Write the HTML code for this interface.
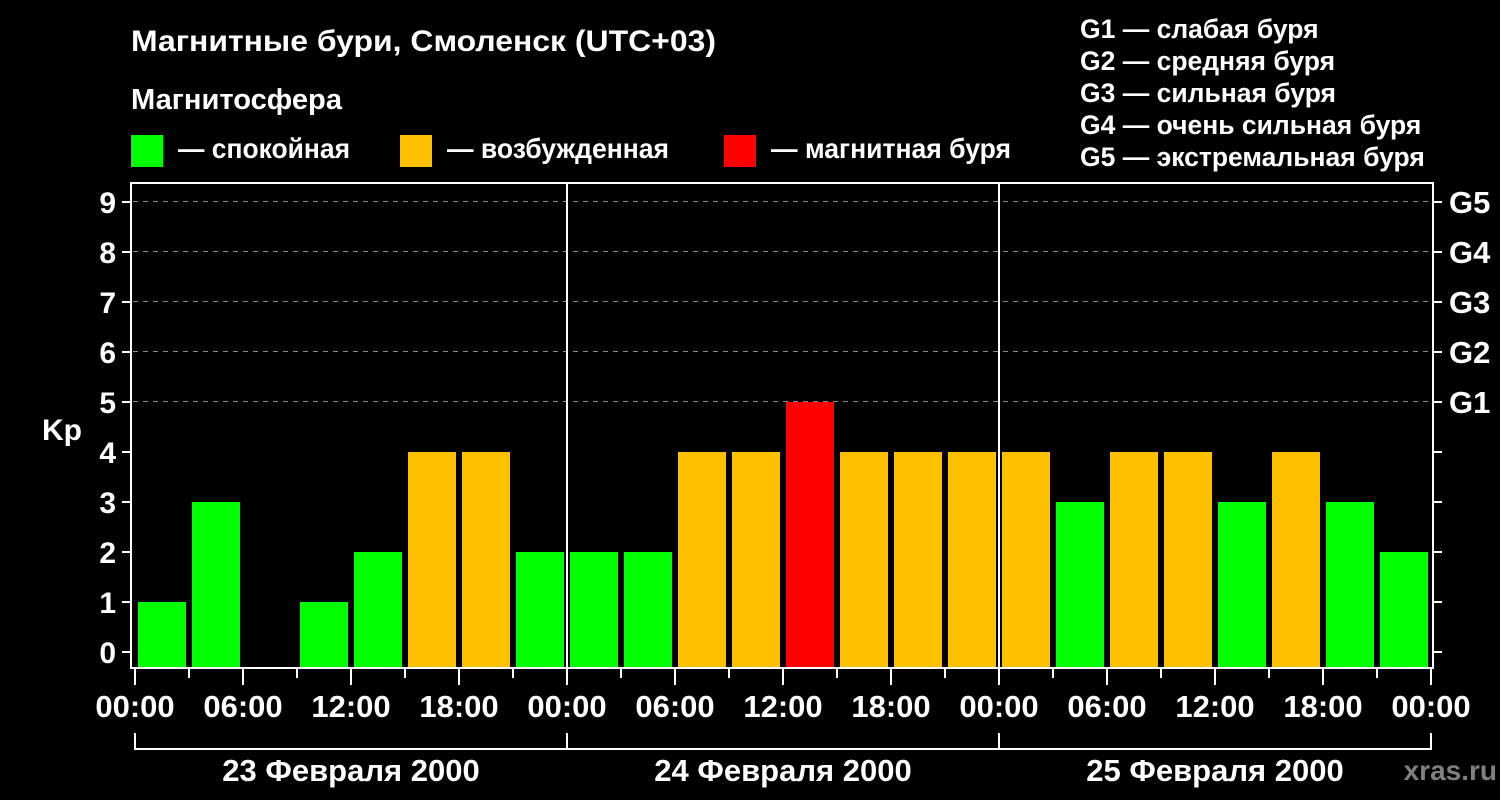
<!DOCTYPE html>
<html><head><meta charset="utf-8"><style>
html,body{margin:0;padding:0;background:#000;}
svg{display:block;}
text{font-family:"Liberation Sans",sans-serif;font-weight:bold;fill:#fff;}
</style></head><body>
<svg width="1500" height="800" viewBox="0 0 1500 800" xmlns="http://www.w3.org/2000/svg">
<rect width="1500" height="800" fill="#000"/>
<text x="131" y="51" font-size="30" textLength="585" lengthAdjust="spacingAndGlyphs">Магнитные бури, Смоленск (UTC+03)</text>
<text x="131" y="109" font-size="29" textLength="211" lengthAdjust="spacingAndGlyphs">Магнитосфера</text>
<rect x="131" y="135" width="32" height="32" fill="#00ff00"/>
<text x="178" y="158" font-size="28" textLength="172" lengthAdjust="spacingAndGlyphs">— спокойная</text>
<rect x="400" y="135" width="32" height="32" fill="#ffc000"/>
<text x="447" y="158" font-size="28" textLength="222" lengthAdjust="spacingAndGlyphs">— возбужденная</text>
<rect x="724" y="135" width="32" height="32" fill="#ff0000"/>
<text x="771" y="158" font-size="28" textLength="240" lengthAdjust="spacingAndGlyphs">— магнитная буря</text>
<g font-size="26.5">
<text x="1080" y="38">G1 — слабая буря</text>
<text x="1080" y="70">G2 — средняя буря</text>
<text x="1080" y="102">G3 — сильная буря</text>
<text x="1080" y="134">G4 — очень сильная буря</text>
<text x="1080" y="166">G5 — экстремальная буря</text>
</g>
<g stroke="#888" stroke-width="1" stroke-dasharray="5,5">
<line x1="133" x2="1432" y1="201.5" y2="201.5"/>
<line x1="133" x2="1432" y1="251.5" y2="251.5"/>
<line x1="133" x2="1432" y1="301.5" y2="301.5"/>
<line x1="133" x2="1432" y1="351.5" y2="351.5"/>
<line x1="133" x2="1432" y1="401.5" y2="401.5"/>
</g>
<g id="bars"></g>
<rect x="131" y="183" width="1302" height="485" fill="none" stroke="#fff" stroke-width="2"/>
<line x1="567" x2="567" y1="183" y2="668" stroke="#fff" stroke-width="2"/>
<line x1="999" x2="999" y1="183" y2="668" stroke="#fff" stroke-width="2"/>
<g id="ticks" stroke="#fff" stroke-width="2"></g>
<g font-size="30" text-anchor="end">
<text x="116" y="663">0</text><text x="116" y="613">1</text><text x="116" y="563">2</text>
<text x="116" y="513">3</text><text x="116" y="463">4</text><text x="116" y="413">5</text>
<text x="116" y="363">6</text><text x="116" y="313">7</text><text x="116" y="263">8</text>
<text x="116" y="213">9</text>
</g>
<text x="42" y="440" font-size="30">Kp</text>
<g font-size="31">
<text x="1449" y="413">G1</text><text x="1449" y="363">G2</text><text x="1449" y="313">G3</text>
<text x="1449" y="263">G4</text><text x="1449" y="213">G5</text>
</g>
<g font-size="31" text-anchor="middle">
<text x="135" y="717">00:00</text><text x="243" y="717">06:00</text><text x="351" y="717">12:00</text><text x="459" y="717">18:00</text>
<text x="567" y="717">00:00</text><text x="675" y="717">06:00</text><text x="783" y="717">12:00</text><text x="891" y="717">18:00</text>
<text x="999" y="717">00:00</text><text x="1107" y="717">06:00</text><text x="1215" y="717">12:00</text><text x="1323" y="717">18:00</text>
<text x="1431" y="717">00:00</text>
<text x="351" y="781">23 Февраля 2000</text>
<text x="783" y="781">24 Февраля 2000</text>
<text x="1215" y="781">25 Февраля 2000</text>
</g>
<text x="1497" y="780" font-size="28" text-anchor="end" style="fill:#808080">xras.ru</text>
<g stroke="#fff" stroke-width="2" fill="none">
<path d="M135 733V749H1431V733"/>
<path d="M567 733V749M999 733V749"/>
</g>
</svg>
<script>
var d=[1,3,0,1,2,4,4,2, 2,2,4,4,5,4,4,4, 4,3,4,4,3,4,3,2];
var ns="http://www.w3.org/2000/svg",g=document.getElementById("bars");
d.forEach(function(v,i){if(!v)return;var r=document.createElementNS(ns,"rect");
var top=652-50*v;r.setAttribute("x",138+54*i);r.setAttribute("y",top);r.setAttribute("width",48);r.setAttribute("height",667-top);
r.setAttribute("fill",v>=5?"#ff0000":v>=4?"#ffc000":"#00ff00");g.appendChild(r);});
var t=document.getElementById("ticks");
function L(x1,y1,x2,y2){var l=document.createElementNS(ns,"line");l.setAttribute("x1",x1);l.setAttribute("y1",y1);l.setAttribute("x2",x2);l.setAttribute("y2",y2);t.appendChild(l);}
for(var k=0;k<=9;k++){var y=652-50*k;L(122,y,131,y);L(1433,y,1442,y);}
for(var i=0;i<=24;i++){var x=135+54*i;L(x,669,x,i%2?678:685);}
</script>
</body></html>
